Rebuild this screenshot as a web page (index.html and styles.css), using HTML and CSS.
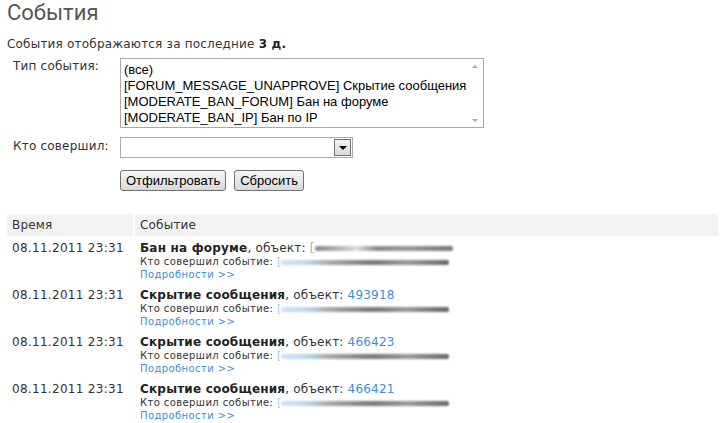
FILE: index.html
```html
<!DOCTYPE html>
<html lang="ru">
<head>
<meta charset="utf-8">
<title>События</title>
<link rel="stylesheet" href="styles.css">
</head>
<body>
<h1 class="title">События</h1>
<p class="note">События отображаются за последние <b>3 д.</b></p>

<div class="filter">
  <div class="frow">
    <label class="flabel">Тип события:</label>
    <div class="listbox">
      <div class="lb-items">
        <div>(все)</div>
        <div>[FORUM_MESSAGE_UNAPPROVE] Скрытие сообщения</div>
        <div>[MODERATE_BAN_FORUM] Бан на форуме</div>
        <div>[MODERATE_BAN_IP] Бан по IP</div>
      </div>
      <div class="lb-scroll">
        <span class="arr-up"></span>
        <span class="arr-down"></span>
      </div>
    </div>
  </div>
  <div class="frow frow-who">
    <label class="flabel">Кто совершил:</label>
    <div class="combo">
      <div class="combo-text"></div>
      <div class="combo-btn"><span class="tri"></span></div>
    </div>
  </div>
  <div class="frow frow-btns">
    <span class="flabel"></span>
    <button class="btn" type="button">Отфильтровать</button>
    <button class="btn" type="button">Сбросить</button>
  </div>
</div>

<table class="log">
  <thead>
    <tr><th class="c-time">Время</th><th class="c-ev">Событие</th></tr>
  </thead>
  <tbody>
    <tr>
      <td class="c-time">08.11.2011 23:31</td>
      <td class="c-ev">
        <div class="ev-title"><b>Бан на форуме</b>, объект: <span class="br">[</span><span class="blur blur-obj"></span></div>
        <div class="ev-who">Кто совершил событие: <span class="br blue">[</span><span class="blur blur-who"></span></div>
        <div class="ev-more"><a href="#">Подробности &gt;&gt;</a></div>
      </td>
    </tr>
    <tr>
      <td class="c-time">08.11.2011 23:31</td>
      <td class="c-ev">
        <div class="ev-title"><b>Скрытие сообщения</b>, объект: <a href="#">493918</a></div>
        <div class="ev-who">Кто совершил событие: <span class="br blue">[</span><span class="blur blur-who"></span></div>
        <div class="ev-more"><a href="#">Подробности &gt;&gt;</a></div>
      </td>
    </tr>
    <tr>
      <td class="c-time">08.11.2011 23:31</td>
      <td class="c-ev">
        <div class="ev-title"><b>Скрытие сообщения</b>, объект: <a href="#">466423</a></div>
        <div class="ev-who">Кто совершил событие: <span class="br blue">[</span><span class="blur blur-who"></span></div>
        <div class="ev-more"><a href="#">Подробности &gt;&gt;</a></div>
      </td>
    </tr>
    <tr>
      <td class="c-time">08.11.2011 23:31</td>
      <td class="c-ev">
        <div class="ev-title"><b>Скрытие сообщения</b>, объект: <a href="#">466421</a></div>
        <div class="ev-who">Кто совершил событие: <span class="br blue">[</span><span class="blur blur-who"></span></div>
        <div class="ev-more"><a href="#">Подробности &gt;&gt;</a></div>
      </td>
    </tr>
  </tbody>
</table>
</body>
</html>
```

FILE: styles.css
```css
html, body {
  margin: 0;
  padding: 0;
  background: #fff;
}
body {
  padding: 0 9px 0 7px;
  font-family: "DejaVu Sans", Verdana, sans-serif;
  font-size: 12px;
  letter-spacing: 0.2px;
  color: #333;
}
.title {
  margin: 0;
  padding-top: 0;
  font-family: Roboto, "Open Sans", sans-serif;
  font-weight: 400;
  font-size: 22px;
  line-height: normal;
  letter-spacing: 0;
  color: #555;
}
.note {
  margin: 11px 0 0;
  line-height: 16px;
  color: #333;
}
.note b { color: #222; }

.filter {
  margin-top: 6px;
}
.frow {
  display: flex;
  align-items: flex-start;
}
.flabel {
  width: 113px;
  padding-left: 6px;
  box-sizing: border-box;
  flex: none;
  font-size: 12px;
  line-height: 16px;
  padding-top: 0;
  color: #333;
}
.listbox {
  width: 364px;
  height: 70px;
  box-sizing: border-box;
  border: 1px solid #a9a9a9;
  display: flex;
  background: #fff;
}
.lb-items {
  flex: 1;
  padding: 3px 0 0 3px;
  font-family: "Liberation Sans", Arial, sans-serif;
  font-size: 13px;
  letter-spacing: 0;
  line-height: 16px;
  color: #000;
  white-space: nowrap;
  overflow: hidden;
}
.lb-scroll {
  width: 17px;
  flex: none;
  display: flex;
  flex-direction: column;
  justify-content: space-between;
  align-items: center;
  padding: 6px 0 5px;
  box-sizing: border-box;
}
.arr-up, .arr-down {
  width: 0;
  height: 0;
  border-left: 3px solid transparent;
  border-right: 3px solid transparent;
}
.arr-up { border-bottom: 3px solid #a8a8a8; }
.arr-down { border-top: 3px solid #a8a8a8; }

.frow-who {
  margin-top: 9px;
}
.frow-who .flabel { padding-top: 1px; }
.combo {
  width: 233px;
  height: 21px;
  box-sizing: border-box;
  border: 1px solid #a9a9a9;
  display: flex;
  background: #fff;
}
.combo-text { flex: 1; }
.combo-btn {
  width: 17px;
  height: 17px;
  margin: 1px;
  box-sizing: border-box;
  border: 1px solid #6f6f6f;
  background: linear-gradient(#f4f4f4, #d8d8d8);
  display: flex;
  align-items: center;
  justify-content: center;
}
.tri {
  width: 0;
  height: 0;
  border-left: 4px solid transparent;
  border-right: 4px solid transparent;
  border-top: 4px solid #000;
  margin-top: 1px;
}

.frow-btns {
  margin-top: 12px;
  gap: 8px;
}
.frow-btns .flabel { margin-right: -8px; }
.btn {
  height: 21px;
  padding: 0 5px;
  margin: 0;
  border: 1px solid #707070;
  border-radius: 3px;
  background: linear-gradient(#f6f6f6 0%, #e8e8e8 50%, #d9d9d9 100%);
  font-family: "Liberation Sans", Arial, sans-serif;
  font-size: 13px;
  letter-spacing: 0;
  line-height: 17px;
  color: #000;
}

.log {
  margin-top: 23px;
  width: 711px;
  border-collapse: separate;
  border-spacing: 0;
}
.log th {
  background: #f2f2f2;
  font-weight: 400;
  text-align: left;
  height: 22px;
  padding: 0 5px;
  line-height: 22px;
  color: #333;
  box-sizing: border-box;
}
.log th.c-time {
  width: 128px;
  border-right: 2px solid #fff;
}
.log td {
  vertical-align: top;
  padding: 5px 5px 1px;
}
.log td.c-time {
  line-height: 14px;
  white-space: nowrap;
  letter-spacing: 0.3px;
}
.ev-title {
  line-height: 14px;
  white-space: nowrap;
}
.ev-title b { color: #222; }
.ev-who, .ev-more {
  font-size: 10px;
  letter-spacing: 0.4px;
  line-height: 13px;
  white-space: nowrap;
}
.ev-more { line-height: 14px; }
a {
  color: #3c8fd2;
  text-decoration: none;
}
.br { color: #aaa; }
.br.blue { color: #9cc7ec; }
.blur {
  display: inline-block;
  height: 5px;
  vertical-align: middle;
  filter: blur(1.2px);
  border-radius: 2px;
}
.blur-obj {
  width: 138px;
  background: linear-gradient(90deg, #888 0%, #bbb 20%, #ddd 30%, #888 45%, #999 65%, #777 100%);
}
.blur-who {
  width: 168px;
  background: linear-gradient(90deg, #cfe4f6 0%, #bcd8f0 15%, #aaa 28%, #777 55%, #999 75%, #666 100%);
}
```
